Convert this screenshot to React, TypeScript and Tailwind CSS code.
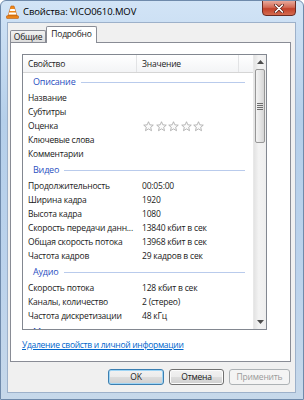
import React from "react";

type Row = { type: "group"; label: string } | { type: "row"; label: string; value?: string; stars?: boolean };

const rows: Row[] = [
  { type: "group", label: "Описание" },
  { type: "row", label: "Название" },
  { type: "row", label: "Субтитры" },
  { type: "row", label: "Оценка", stars: true },
  { type: "row", label: "Ключевые слова" },
  { type: "row", label: "Комментарии" },
  { type: "group", label: "Видео" },
  { type: "row", label: "Продолжительность", value: "00:05:00" },
  { type: "row", label: "Ширина кадра", value: "1920" },
  { type: "row", label: "Высота кадра", value: "1080" },
  { type: "row", label: "Скорость передачи данн...", value: "13840 кбит в сек" },
  { type: "row", label: "Общая скорость потока", value: "13968 кбит в сек" },
  { type: "row", label: "Частота кадров", value: "29 кадров в сек" },
  { type: "group", label: "Аудио" },
  { type: "row", label: "Скорость потока", value: "128 кбит в сек" },
  { type: "row", label: "Каналы, количество", value: "2 (стерео)" },
  { type: "row", label: "Частота дискретизации", value: "48 кГц" },
  { type: "group", label: "Мультимедиа" },
];

const font = { fontFamily: '"Open Sans", "Noto Sans", sans-serif' };

const Star = () => (
  <svg width="11" height="11" viewBox="0 0 12 12">
    <path
      d="M6 0.8 L7.5 4.2 L11.2 4.5 L8.4 6.9 L9.3 10.6 L6 8.6 L2.7 10.6 L3.6 6.9 L0.8 4.5 L4.5 4.2 Z"
      fill="#fbfbfb"
      stroke="#a9a9a9"
      strokeWidth="0.9"
      strokeLinejoin="round"
    />
  </svg>
);

const VlcIcon = () => (
  <svg width="13" height="14" viewBox="0 0 13 14">
    <path d="M5 1 L8 1 L11 11 L2 11 Z" fill="#f08a1c" stroke="#c05a08" strokeWidth="0.6" />
    <path d="M4.3 4 L8.7 4 L9.3 6 L3.7 6 Z" fill="#fff" />
    <path d="M3.2 7.6 L9.8 7.6 L10.4 9.6 L2.6 9.6 Z" fill="#fff" />
    <rect x="0.5" y="10.8" width="12" height="2.6" rx="0.6" fill="#f08a1c" stroke="#b5560a" strokeWidth="0.6" />
  </svg>
);

const Arrow = ({ up }: { up?: boolean }) => (
  <svg width="7" height="4" viewBox="0 0 7 4">
    <path d={up ? "M0 4 L3.5 0 L7 4 Z" : "M0 0 L3.5 4 L7 0 Z"} fill="#4d4d4d" />
  </svg>
);

const App: React.FC = () => {
  return (
    <div
      className="w-[304px] h-[400px] flex flex-col border border-[#6f8aab] rounded-t-[6px] bg-[linear-gradient(to_bottom,#d2e4f6,#b5cfea_30%,#bcd3ec_70%,#c6d8ea)] text-[#1a1a1a] overflow-hidden"
      style={font}
    >
      {/* title bar */}
      <div className="h-[21px] flex items-start shrink-0">
        <div className="ml-[5px] mt-[4px]">
          <VlcIcon />
        </div>
        <div className="ml-[4px] mt-[4px] text-[9.5px] leading-[14px] tracking-[-0.1px] text-black">Свойства: VICO0610.MOV</div>
        <div className="ml-auto mr-[7px] w-[34px] h-[16px] -mt-px rounded-b-[4px] border border-[#6a2b22] bg-[linear-gradient(to_bottom,#e9a99b,#d26a55_45%,#c2412a_55%,#d46b4f)] flex items-center justify-center">
          <svg width="10" height="9" viewBox="0 0 10 9">
            <path d="M1.5 1 L8.5 8 M8.5 1 L1.5 8" stroke="#5a2018" strokeWidth="3" strokeLinecap="round" />
            <path d="M1.5 1 L8.5 8 M8.5 1 L1.5 8" stroke="#ffffff" strokeWidth="1.6" strokeLinecap="round" />
          </svg>
        </div>
      </div>

      {/* client */}
      <div className="ml-[6px] mr-[7px] mb-[6px] h-[371px] bg-[#f0f0f0] border border-[#9db1ca] pt-[4px] pl-[2px] pr-[4px] flex flex-col tracking-[-0.2px]">
        {/* tabs */}
        <div className="h-[16px] flex items-end relative z-10 -mb-px">
          <div className="w-[36px] h-[12px] border border-[#898c95] border-b-0 rounded-t-[2px] bg-[linear-gradient(to_bottom,#f2f2f2,#dcdcdc)] text-[8.5px] leading-[11px] text-center mb-px">
            Общие
          </div>
          <div className="w-[51px] h-[17px] border border-[#898c95] border-b-0 rounded-t-[2px] bg-white text-[8.5px] leading-[14px] text-center">
            Подробно
          </div>
        </div>

        {/* panel */}
        <div className="h-[320px] border border-[#898c95] bg-white pt-[11px] pl-[11px] flex flex-col">
          <div className="w-[245px] h-[276px] border border-[#828790] flex overflow-hidden">
            <div className="w-[230px] flex flex-col overflow-hidden">
              {/* header */}
              <div className="h-[18px] shrink-0 flex border-b border-[#d5d5d5] bg-[linear-gradient(to_bottom,#ffffff,#f3f4f6)] text-[8.5px] leading-[17px] text-[#222]">
                <div className="w-[114px] pl-[5px] border-r border-[#e2e3e5]">Свойство</div>
                <div className="w-[102px] pl-[5px] border-r border-[#e2e3e5]">Значение</div>
                <div className="flex-1" />
              </div>
              {rows.map((r, i) =>
                r.type === "group" ? (
                  <div key={i} className="h-[18px] shrink-0 flex items-center pl-[10px] pr-[8px]">
                    <span className="text-[9px] leading-[14px] text-[#2a4fbf]">{r.label}</span>
                    <div className="flex-1 ml-[5px] h-px bg-[#b9cbec]" />
                  </div>
                ) : (
                  <div key={i} className="h-[14px] shrink-0 flex items-center text-[8.5px] leading-[14px]">
                    <div className="w-[114px] pl-[5px] whitespace-nowrap overflow-hidden">{r.label}</div>
                    <div className="pl-[5px] whitespace-nowrap flex items-center">
                      {r.stars ? (
                        <div className="flex gap-[1.5px] pl-px">
                          <Star />
                          <Star />
                          <Star />
                          <Star />
                          <Star />
                        </div>
                      ) : (
                        r.value
                      )}
                    </div>
                  </div>
                )
              )}
            </div>

            {/* scrollbar */}
            <div className="w-[13px] flex flex-col bg-[linear-gradient(to_right,#e3e3e3,#f3f3f3_40%,#eeeeee)] border-l border-[#e8e8e8]">
              <div className="h-[14px] flex items-center justify-center">
                <Arrow up />
              </div>
              <div className="h-[74px] mx-px rounded-[2px] border border-[#979797] bg-[linear-gradient(to_right,#f3f3f3,#e6e6e6_50%,#d6d6d6)] flex flex-col items-center justify-center gap-px">
                <div className="w-[6px] h-px bg-[#6e6e6e]" />
                <div className="w-[6px] h-px bg-[#6e6e6e]" />
                <div className="w-[6px] h-px bg-[#6e6e6e]" />
                <div className="w-[6px] h-px bg-[#6e6e6e]" />
              </div>
              <div className="flex-1" />
              <div className="h-[14px] flex items-center justify-center">
                <Arrow />
              </div>
            </div>
          </div>

          <div className="mt-[8px] text-[8.5px] leading-[14px] tracking-[-0.3px] text-[#0066cc] underline whitespace-nowrap">
            Удаление свойств и личной информации
          </div>
        </div>

        {/* buttons */}
        <div className="mt-[7px] flex justify-end gap-[5px] pr-px">
          <div className="w-[56px] h-[16px] rounded-[3px] border border-[#3c7fb1] bg-[linear-gradient(to_bottom,#f2f2f2,#ebebeb_50%,#dddddd_50%,#cfcfcf)] shadow-[inset_0_0_0_1px_#9fd5f5] text-[8.5px] leading-[14px] text-center">
            OK
          </div>
          <div className="w-[55px] h-[16px] rounded-[3px] border border-[#707070] bg-[linear-gradient(to_bottom,#f2f2f2,#ebebeb_50%,#dddddd_50%,#cfcfcf)] shadow-[inset_0_0_0_1px_#fcfcfc] text-[8.5px] leading-[14px] text-center">
            Отмена
          </div>
          <div className="w-[61px] h-[16px] rounded-[3px] border border-[#adb2b5] bg-[#f4f4f4] text-[8.5px] leading-[14px] text-center text-[#9a9a9a]">
            Применить
          </div>
        </div>
      </div>
    </div>
  );
};

export default App;
